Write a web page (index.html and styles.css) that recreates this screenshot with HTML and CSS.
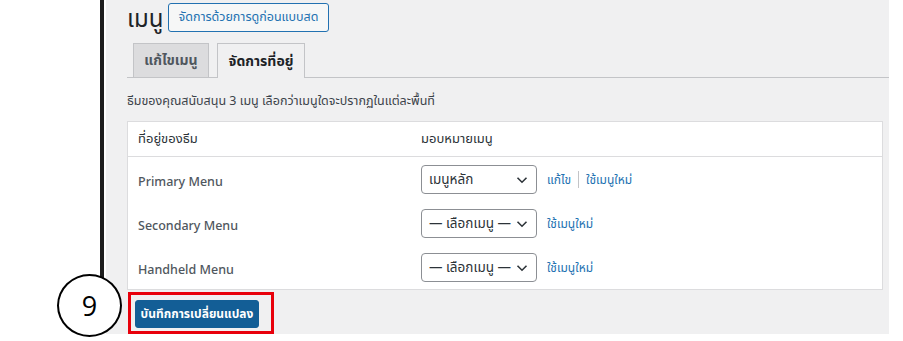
FILE: index.html
```html
<!DOCTYPE html>
<html lang="th">
<head>
<meta charset="utf-8">
<link rel="stylesheet" href="styles.css">
</head>
<body>
<div class="page">
  <div class="gutter"></div>
  <div class="edge"></div>
  <main class="panel">
    <div class="head">
      <h1 class="title">เมนู</h1>
      <a class="live-btn">จัดการด้วยการดูก่อนแบบสด</a>
    </div>
    <nav class="tabs">
      <a class="tab">แก้ไขเมนู</a>
      <a class="tab active">จัดการที่อยู่</a>
    </nav>
    <p class="desc">ธีมของคุณสนับสนุน 3 เมนู เลือกว่าเมนูใดจะปรากฏในแต่ละพื้นที่</p>
    <div class="table">
      <div class="thead">
        <div class="c1">ที่อยู่ของธีม</div>
        <div class="c2">มอบหมายเมนู</div>
      </div>
      <div class="row">
        <div class="c1 label">Primary Menu</div>
        <div class="c2 cell">
          <div class="select"><span>เมนูหลัก</span><svg class="chev" viewBox="0 0 12 8"><path d="M1.5 1.8 6 6.2 10.5 1.8" fill="none" stroke="#2c3338" stroke-width="1.6"/></svg></div>
          <a class="link">แก้ไข</a><span class="sep"></span><a class="link">ใช้เมนูใหม่</a>
        </div>
      </div>
      <div class="row">
        <div class="c1 label">Secondary Menu</div>
        <div class="c2 cell">
          <div class="select"><span>— เลือกเมนู —</span><svg class="chev" viewBox="0 0 12 8"><path d="M1.5 1.8 6 6.2 10.5 1.8" fill="none" stroke="#2c3338" stroke-width="1.6"/></svg></div>
          <a class="link">ใช้เมนูใหม่</a>
        </div>
      </div>
      <div class="row">
        <div class="c1 label">Handheld Menu</div>
        <div class="c2 cell">
          <div class="select"><span>— เลือกเมนู —</span><svg class="chev" viewBox="0 0 12 8"><path d="M1.5 1.8 6 6.2 10.5 1.8" fill="none" stroke="#2c3338" stroke-width="1.6"/></svg></div>
          <a class="link">ใช้เมนูใหม่</a>
        </div>
      </div>
    </div>
    <div class="highlight">
      <button class="save">บันทึกการเปลี่ยนแปลง</button>
    </div>
  </main>
</div>
<div class="step">9</div>
</body>
</html>
```
FILE: styles.css
```css
* { box-sizing: border-box; }
html, body { margin: 0; padding: 0; background: #fff; }
body {
  width: 903px;
  height: 341px;
  overflow: hidden;
  position: relative;
  font-family: "Noto Sans", "Noto Sans Thai", "Open Sans", sans-serif;
  color: #3c434a;
}
.page { display: flex; align-items: flex-start; }
.gutter { width: 100px; flex: none; }
.edge { width: 4px; height: 290px; background: #1d1d1d; flex: none; margin-right: 2px; }
.panel {
  width: 783px;
  height: 334px;
  flex: none;
  background: #f0f0f1;
  padding: 3px 6px 0 21px;
  display: flex;
  flex-direction: column;
}
.head { display: flex; align-items: center; height: 29px; }
.title { margin: 0; font-size: 24px; font-weight: 400; color: #1d2327; line-height: 29px; width: 41px; }
.live-btn {
  display: flex; align-items: center; justify-content: center;
  width: 161px; height: 29px; padding: 0;
  border: 1px solid #2271b1; border-radius: 3px;
  background: #f6f7f7; color: #2271b1; font-size: 12.5px;
}
.tabs {
  display: flex; gap: 8px;
  margin: 11px -6px 0 0;
  padding-left: 6px;
  border-bottom: 1px solid #c3c4c7;
}
.tab {
  height: 34px;
  display: flex; align-items: center; justify-content: center;
  border: 1px solid #c3c4c7; border-bottom: none;
  background: #dcdcde; color: #50575e;
  font-size: 14px; font-weight: 700;
  width: 76px;
}
.tab.active { background: #f0f0f1; color: #1d2327; margin-bottom: -1px; height: 35px; width: 88px; }
.desc { margin: 15px 0 0; font-size: 12.5px; line-height: 16px; color: #3c434a; }
.table {
  margin-top: 12px;
  width: 756px;
  background: #fff;
  border: 1px solid #dcdcde;
}
.thead { display: flex; height: 35px; align-items: center; border-bottom: 1px solid #dcdcde; color: #2c3338; font-size: 13px; }
.c1 { width: 293px; padding-left: 10px; flex: none; }
.c2 { flex: 1; }
.row { display: flex; height: 44px; }
.label { padding-top: 15px; font-size: 12.5px; color: #50575e; font-weight: 500; line-height: 20px; }
.cell { display: flex; align-items: flex-start; padding-top: 8px; }
.select {
  width: 116px; height: 29px;
  border: 1px solid #8c8f94; border-radius: 4px;
  display: flex; align-items: center; justify-content: space-between;
  padding: 0 8px 0 7px;
  font-size: 13.5px; color: #2c3338;
}
.chev { width: 12px; height: 8px; }
.link { color: #2271b1; font-size: 12px; margin-left: 10px; line-height: 29px; }
.sep { width: 1px; height: 17px; background: #c3c4c7; margin: 6px -3px 0 7px; }
.highlight {
  margin: 2px 0 0 1px;
  width: 146px; height: 44px;
  border: 3px solid #e8000b;
  padding: 5px 0 0 4px;
}
.save {
  width: 124px; height: 28px;
  background: #135e96; border: 1px solid #135e96; border-radius: 3px;
  color: #fff; font-family: inherit; font-size: 12px; font-weight: 700;
  padding: 0; display: flex; align-items: center; justify-content: center;
}
.step {
  position: absolute;
  left: 57px; top: 274px;
  width: 65px; height: 63px;
  border: 2.5px solid #000; border-radius: 50%;
  background: #fff;
  display: flex; align-items: center; justify-content: center;
  font-family: "Open Sans", sans-serif; font-size: 27px; color: #000;
}
```
